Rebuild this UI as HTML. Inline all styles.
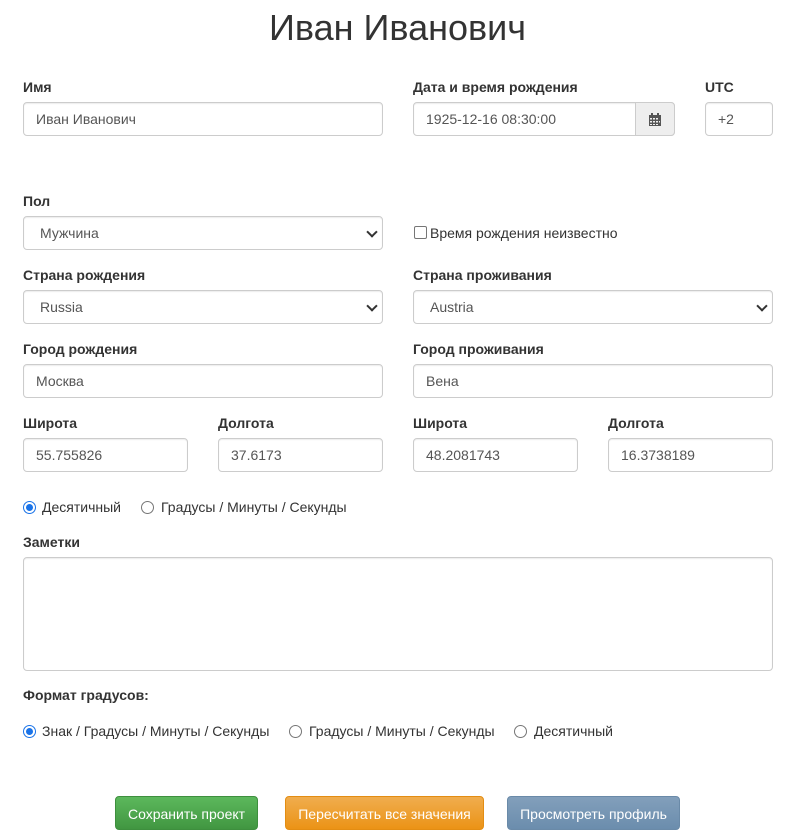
<!DOCTYPE html>
<html><head><meta charset="utf-8"><style>
body{margin:0;width:795px;height:828px;overflow:hidden;background:#fff;font-family:"Liberation Sans",Arial,sans-serif;font-size:14px;color:#333;position:relative}
.a{position:absolute}
h1{position:absolute;left:0;width:795px;text-align:center;top:6px;margin:0;font-size:36px;font-weight:500;line-height:44px}
.l{position:absolute;font-weight:bold;font-size:14px;line-height:20px}
.i{position:absolute;height:34px;box-sizing:border-box;border:1px solid #ccc;border-radius:4px;padding:0 12px;line-height:32px;color:#555;box-shadow:inset 0 1px 1px rgba(0,0,0,.075);background:#fff}
.s:after{content:"";position:absolute;right:6px;top:11px;width:6px;height:6px;border-right:2px solid #333;border-bottom:2px solid #333;transform:rotate(45deg)}
.s{padding-left:16px}
.r{position:absolute;width:11px;height:11px;border:1px solid #767676;border-radius:50%;background:#fff}
.r.on{border:1px solid #1a73e8;background:#fff}
.r.on:after{content:"";position:absolute;left:2px;top:2px;width:7px;height:7px;border-radius:50%;background:#1a73e8}
.t{position:absolute;line-height:20px;color:#333}
.b{position:absolute;top:796px;height:34px;color:#fff;text-align:center;line-height:34px;border-radius:4px;font-size:14px}
</style></head><body>
<h1>Иван Иванович</h1>
<div class="l" style="left:23px;top:77px">Имя</div>
<div class="l" style="left:413px;top:77px">Дата и время рождения</div>
<div class="l" style="left:705px;top:77px">UTC</div>
<div class="i" style="left:23px;top:102px;width:360px">Иван Иванович</div>
<div class="i" style="left:413px;top:102px;width:262px">1925-12-16 08:30:00</div>
<div class="a" style="left:635px;top:102px;width:40px;height:34px;box-sizing:border-box;border:1px solid #ccc;border-radius:0 4px 4px 0;background:#eee">
<svg width="14" height="14" style="position:absolute;left:12px;top:10px" viewBox="0 0 14 14"><rect x="1" y="2" width="12" height="11" fill="#555"/><rect x="3" y="0" width="2" height="3" fill="#555"/><rect x="9" y="0" width="2" height="3" fill="#555"/><g fill="#eee"><rect x="2" y="5" width="2" height="1.5"/><rect x="5" y="5" width="2" height="1.5"/><rect x="8" y="5" width="2" height="1.5"/><rect x="2" y="8" width="2" height="1.5"/><rect x="5" y="8" width="2" height="1.5"/><rect x="8" y="8" width="2" height="1.5"/><rect x="11" y="8" width="1" height="1.5"/><rect x="2" y="11" width="2" height="1"/><rect x="5" y="11" width="2" height="1"/><rect x="8" y="11" width="2" height="1"/></g></svg></div>
<div class="i" style="left:705px;top:102px;width:68px">+2</div>

<div class="l" style="left:23px;top:191px">Пол</div>
<div class="i s" style="left:23px;top:216px;width:360px">Мужчина</div>
<div class="a" style="left:414px;top:226px;width:11px;height:11px;border:1px solid #767676;border-radius:2px"></div>
<div class="t" style="left:430px;top:223px">Время рождения неизвестно</div>

<div class="l" style="left:23px;top:265px">Страна рождения</div>
<div class="l" style="left:413px;top:265px">Страна проживания</div>
<div class="i s" style="left:23px;top:290px;width:360px">Russia</div>
<div class="i s" style="left:413px;top:290px;width:360px">Austria</div>

<div class="l" style="left:23px;top:339px">Город рождения</div>
<div class="l" style="left:413px;top:339px">Город проживания</div>
<div class="i" style="left:23px;top:364px;width:360px">Москва</div>
<div class="i" style="left:413px;top:364px;width:360px">Вена</div>

<div class="l" style="left:23px;top:413px">Широта</div>
<div class="l" style="left:218px;top:413px">Долгота</div>
<div class="l" style="left:413px;top:413px">Широта</div>
<div class="l" style="left:608px;top:413px">Долгота</div>
<div class="i" style="left:23px;top:438px;width:165px">55.755826</div>
<div class="i" style="left:218px;top:438px;width:165px">37.6173</div>
<div class="i" style="left:413px;top:438px;width:165px">48.2081743</div>
<div class="i" style="left:608px;top:438px;width:165px">16.3738189</div>

<div class="r on" style="left:23px;top:501px"></div><div class="t" style="left:42px;top:497px">Десятичный</div>
<div class="r" style="left:141px;top:501px"></div><div class="t" style="left:161px;top:497px">Градусы / Минуты / Секунды</div>

<div class="l" style="left:23px;top:532px">Заметки</div>
<div class="i" style="left:23px;top:557px;width:750px;height:114px"></div>

<div class="l" style="left:23px;top:685px">Формат градусов:</div>
<div class="r on" style="left:23px;top:725px"></div><div class="t" style="left:42px;top:721px">Знак / Градусы / Минуты / Секунды</div>
<div class="r" style="left:289px;top:725px"></div><div class="t" style="left:309px;top:721px">Градусы / Минуты / Секунды</div>
<div class="r" style="left:514px;top:725px"></div><div class="t" style="left:534px;top:721px">Десятичный</div>

<div class="b" style="left:115px;width:143px;background:linear-gradient(#5cb85c,#419641);border:1px solid #3e8f3e;box-sizing:border-box">Сохранить проект</div>
<div class="b" style="left:285px;width:199px;background:linear-gradient(#f0ad4e,#eb9316);border:1px solid #e38d13;box-sizing:border-box">Пересчитать все значения</div>
<div class="b" style="left:507px;width:173px;background:linear-gradient(#829fbb,#6b8dad);border:1px solid #6a8aa8;box-sizing:border-box">Просмотреть профиль</div>
</body></html>
